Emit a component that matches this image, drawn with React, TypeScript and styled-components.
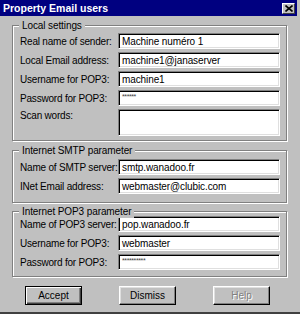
import styled, { createGlobalStyle } from "styled-components";

const GlobalStyle = createGlobalStyle`
  html, body {
    margin: 0;
    padding: 0;
    background: #c0c0c0;
  }
  * {
    box-sizing: border-box;
  }
`;

const Window = styled.div`
  width: 300px;
  height: 314px;
  background: #c0c0c0;
  border-bottom: 2px solid #404040;
  padding-right: 3px;
  font-family: "Liberation Sans", Arial, sans-serif;
  font-size: 10px;
  color: #000;
  display: flex;
  flex-direction: column;
`;

const TitleBar = styled.div`
  height: 16px;
  background: #000080;
  color: #fff;
  font-weight: bold;
  font-size: 10.5px;
  display: flex;
  align-items: center;
  justify-content: space-between;
  padding: 0 2px 0 3px;
`;

const CloseButton = styled.div`
  width: 13px;
  height: 11px;
  background: #c0c0c0;
  border-top: 1px solid #fff;
  border-left: 1px solid #fff;
  border-right: 1px solid #404040;
  border-bottom: 1px solid #404040;
  display: flex;
  align-items: center;
  justify-content: center;
`;

const Body = styled.div`
  padding: 9px 10px 0 12px;
  display: flex;
  flex-direction: column;
`;

const Group = styled.div<{ $top: number; $bottom: number; $gap: number }>`
  position: relative;
  border: 1px solid #808080;
  box-shadow: inset 1px 1px #fff, 1px 1px #fff;
  padding: ${(p) => p.$top}px 6px ${(p) => p.$bottom}px 7px;
  margin-bottom: ${(p) => p.$gap}px;
  display: flex;
  flex-direction: column;
  gap: 3px;
`;

const Legend = styled.span`
  position: absolute;
  top: -7px;
  left: 6px;
  padding: 0 3px;
  background: #c0c0c0;
  line-height: 13px;
  letter-spacing: -0.1px;
`;

const Row = styled.div<{ $tall?: boolean }>`
  display: flex;
  align-items: ${(p) => (p.$tall ? "flex-start" : "center")};
`;

const Label = styled.span`
  width: 98px;
  flex-shrink: 0;
  letter-spacing: -0.2px;
  white-space: nowrap;
  padding-top: 1px;
`;

const Field = styled.div<{ $tall?: boolean }>`
  flex: 1;
  height: ${(p) => (p.$tall ? 27 : 16)}px;
  background: #fff;
  border-top: 1px solid #808080;
  border-left: 1px solid #808080;
  border-right: 1px solid #fff;
  border-bottom: 1px solid #fff;
  box-shadow: inset 1px 1px #000, inset -1px -1px #dfdfdf;
  padding: 1px 3px 0;
  line-height: 13px;
  letter-spacing: -0.1px;
  white-space: nowrap;
  overflow: hidden;
`;

const Mask = styled.span`
  font-size: 7px;
  line-height: 9px;
  letter-spacing: -0.4px;
  color: #404040;
  vertical-align: top;
`;

const Buttons = styled.div`
  display: flex;
  gap: 37px;
  padding: 0 0 0 13px;
  margin-top: 1px;
`;

const Button = styled.div<{ $default?: boolean; $disabled?: boolean }>`
  width: 57px;
  height: 19px;
  display: flex;
  align-items: center;
  justify-content: center;
  background: #c0c0c0;
  border-top: 1px solid ${(p) => (p.$default ? "#000" : "#fff")};
  border-left: 1px solid ${(p) => (p.$default ? "#000" : "#fff")};
  border-right: 1px solid #000;
  border-bottom: 1px solid #000;
  box-shadow: ${(p) =>
    p.$default
      ? "inset 1px 1px #fff, inset -1px -1px #404040, inset -2px -2px #808080"
      : "inset -1px -1px #808080, inset 1px 1px #dfdfdf"};
  color: ${(p) => (p.$disabled ? "#808080" : "#000")};
  text-shadow: ${(p) => (p.$disabled ? "1px 1px #fff" : "none")};
`;

interface FieldRow {
  label: string;
  value: string;
  mask?: boolean;
  tall?: boolean;
}

const local: FieldRow[] = [
  { label: "Real name of sender:", value: "Machine numéro 1" },
  { label: "Local Email address:", value: "machine1@janaserver" },
  { label: "Username for POP3:", value: "machine1" },
  { label: "Password for POP3:", value: "******", mask: true },
  { label: "Scan words:", value: "", tall: true },
];

const smtp: FieldRow[] = [
  { label: "Name of SMTP server:", value: "smtp.wanadoo.fr" },
  { label: "INet Email address:", value: "webmaster@clubic.com" },
];

const pop3: FieldRow[] = [
  { label: "Name of POP3 server:", value: "pop.wanadoo.fr" },
  { label: "Username for POP3:", value: "webmaster" },
  { label: "Password for POP3:", value: "**********", mask: true },
];

function Rows({ rows }: { rows: FieldRow[] }) {
  return (
    <>
      {rows.map((r) => (
        <Row key={r.label} $tall={r.tall}>
          <Label>{r.label}</Label>
          <Field $tall={r.tall}>{r.mask ? <Mask>{r.value}</Mask> : r.value}</Field>
        </Row>
      ))}
    </>
  );
}

export default function App() {
  return (
    <Window>
      <GlobalStyle />
      <TitleBar>
        <span>Property Email users</span>
        <CloseButton>
          <svg width="8" height="7" viewBox="0 0 8 7">
            <path d="M0.5 0.5 L7.5 6.5 M7.5 0.5 L0.5 6.5" stroke="#000" strokeWidth="1.6" />
          </svg>
        </CloseButton>
      </TitleBar>
      <Body>
        <Group $top={7} $bottom={4} $gap={9}>
          <Legend>Local settings</Legend>
          <Rows rows={local} />
        </Group>
        <Group $top={8} $bottom={8} $gap={8}>
          <Legend>Internet SMTP parameter</Legend>
          <Rows rows={smtp} />
        </Group>
        <Group $top={4} $bottom={6} $gap={8}>
          <Legend>Internet POP3 parameter</Legend>
          <Rows rows={pop3} />
        </Group>
        <Buttons>
          <Button $default>Accept</Button>
          <Button>Dismiss</Button>
          <Button $disabled>Help</Button>
        </Buttons>
      </Body>
    </Window>
  );
}
